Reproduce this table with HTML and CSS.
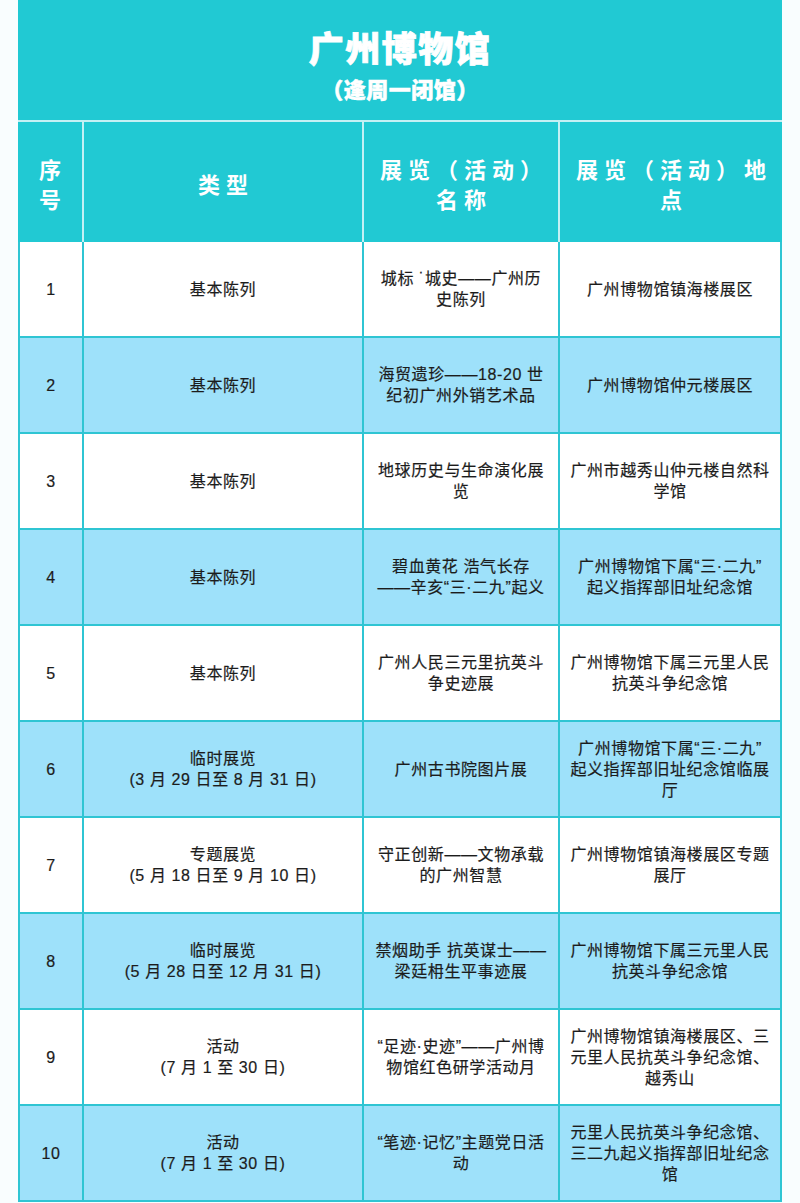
FILE: index.html
```html
<!DOCTYPE html>
<html lang="zh-CN">
<head>
<meta charset="utf-8">
<title>广州博物馆</title>
<link rel="stylesheet" href="styles.css">
</head>
<body>
<div class="sheet">
  <div class="title">
    <h1 class="title-main">广州博物馆</h1>
    <p class="title-sub">（逢周一闭馆）</p>
  </div>
  <div class="head">
    <div class="hcell">序<br>号</div>
    <div class="hcell">类型</div>
    <div class="hcell">展览（活动）<br>名称</div>
    <div class="hcell">展览（活动）地<br>点</div>
  </div>
  <div class="body">
    <div class="row">
      <div class="cell">1</div>
      <div class="cell">基本陈列</div>
      <div class="cell">城标 ˙城史——广州历<br>史陈列</div>
      <div class="cell">广州博物馆镇海楼展区</div>
    </div>
    <div class="row alt">
      <div class="cell">2</div>
      <div class="cell">基本陈列</div>
      <div class="cell">海贸遗珍——18-20 世<br>纪初广州外销艺术品</div>
      <div class="cell">广州博物馆仲元楼展区</div>
    </div>
    <div class="row">
      <div class="cell">3</div>
      <div class="cell">基本陈列</div>
      <div class="cell">地球历史与生命演化展<br>览</div>
      <div class="cell">广州市越秀山仲元楼自然科<br>学馆</div>
    </div>
    <div class="row alt">
      <div class="cell">4</div>
      <div class="cell">基本陈列</div>
      <div class="cell">碧血黄花 浩气长存<br>——辛亥“三·二九”起义</div>
      <div class="cell">广州博物馆下属“三·二九”<br>起义指挥部旧址纪念馆</div>
    </div>
    <div class="row">
      <div class="cell">5</div>
      <div class="cell">基本陈列</div>
      <div class="cell">广州人民三元里抗英斗<br>争史迹展</div>
      <div class="cell">广州博物馆下属三元里人民<br>抗英斗争纪念馆</div>
    </div>
    <div class="row alt">
      <div class="cell">6</div>
      <div class="cell">临时展览<br>(3 月 29 日至 8 月 31 日)</div>
      <div class="cell">广州古书院图片展</div>
      <div class="cell">广州博物馆下属“三·二九”<br>起义指挥部旧址纪念馆临展<br>厅</div>
    </div>
    <div class="row">
      <div class="cell">7</div>
      <div class="cell">专题展览<br>(5 月 18 日至 9 月 10 日)</div>
      <div class="cell">守正创新——文物承载<br>的广州智慧</div>
      <div class="cell">广州博物馆镇海楼展区专题<br>展厅</div>
    </div>
    <div class="row alt">
      <div class="cell">8</div>
      <div class="cell">临时展览<br>(5 月 28 日至 12 月 31 日)</div>
      <div class="cell">禁烟助手 抗英谋士——<br>梁廷枏生平事迹展</div>
      <div class="cell">广州博物馆下属三元里人民<br>抗英斗争纪念馆</div>
    </div>
    <div class="row">
      <div class="cell">9</div>
      <div class="cell">活动<br>(7 月 1 至 30 日)</div>
      <div class="cell">“足迹·史迹”——广州博<br>物馆红色研学活动月</div>
      <div class="cell">广州博物馆镇海楼展区、三<br>元里人民抗英斗争纪念馆、<br>越秀山</div>
    </div>
    <div class="row alt">
      <div class="cell">10</div>
      <div class="cell">活动<br>(7 月 1 至 30 日)</div>
      <div class="cell">“笔迹·记忆”主题党日活<br>动</div>
      <div class="cell">元里人民抗英斗争纪念馆、<br>三二九起义指挥部旧址纪念<br>馆</div>
    </div>
  </div>
</div>
</body>
</html>
```

FILE: styles.css
```css
html, body {
  margin: 0;
  padding: 0;
  background: #f9fdfe;
}

body {
  font-family: "Liberation Sans", "Noto Sans CJK SC", sans-serif;
  color: #1c1c1c;
}

.sheet {
  width: 764px;
  margin: 0 18px;
}

.title {
  background: #21c9d3;
  height: 120px;
  box-sizing: border-box;
  padding-top: 21px;
  text-align: center;
  color: #ffffff;
  font-family: "Noto Sans CJK SC", sans-serif;
}

.title-main {
  margin: 0;
  font-size: 35px;
  line-height: 51px;
  font-weight: 900;
  letter-spacing: 1.5px;
  -webkit-text-stroke: 0.8px #ffffff;
}

.title-sub {
  margin: 0;
  font-size: 22px;
  line-height: 32px;
  font-weight: 900;
  letter-spacing: 0.5px;
  -webkit-text-stroke: 0.5px #ffffff;
}

.head {
  display: grid;
  grid-template-columns: 64px 278px 194px 222px;
  column-gap: 2px;
  padding-top: 2px;
  background: #c4f0f4;
}

.hcell {
  height: 120px;
  background: #21c9d3;
  display: flex;
  align-items: center;
  justify-content: center;
  text-align: center;
  color: #ffffff;
  font-family: "Noto Sans CJK SC", sans-serif;
  font-weight: 700;
  font-size: 22px;
  line-height: 30px;
  letter-spacing: 6px;
  padding-left: 6px;
  padding-top: 2px;
  box-sizing: border-box;
}

.body {
  display: flex;
  flex-direction: column;
  gap: 2px;
  padding: 0 2px 2px;
  background: #2fc5d3;
}

.row {
  display: grid;
  grid-template-columns: 62px 278px 194px 220px;
  column-gap: 2px;
  height: 94px;
}

.cell {
  background: #ffffff;
  display: flex;
  align-items: center;
  justify-content: center;
  text-align: center;
  white-space: nowrap;
  font-size: 16px;
  line-height: 21px;
  letter-spacing: 0.6px;
  padding: 0 2px;
  -webkit-text-stroke: 0.2px #1c1c1c;
}

.row.alt .cell {
  background: #9ee1fa;
}
```
